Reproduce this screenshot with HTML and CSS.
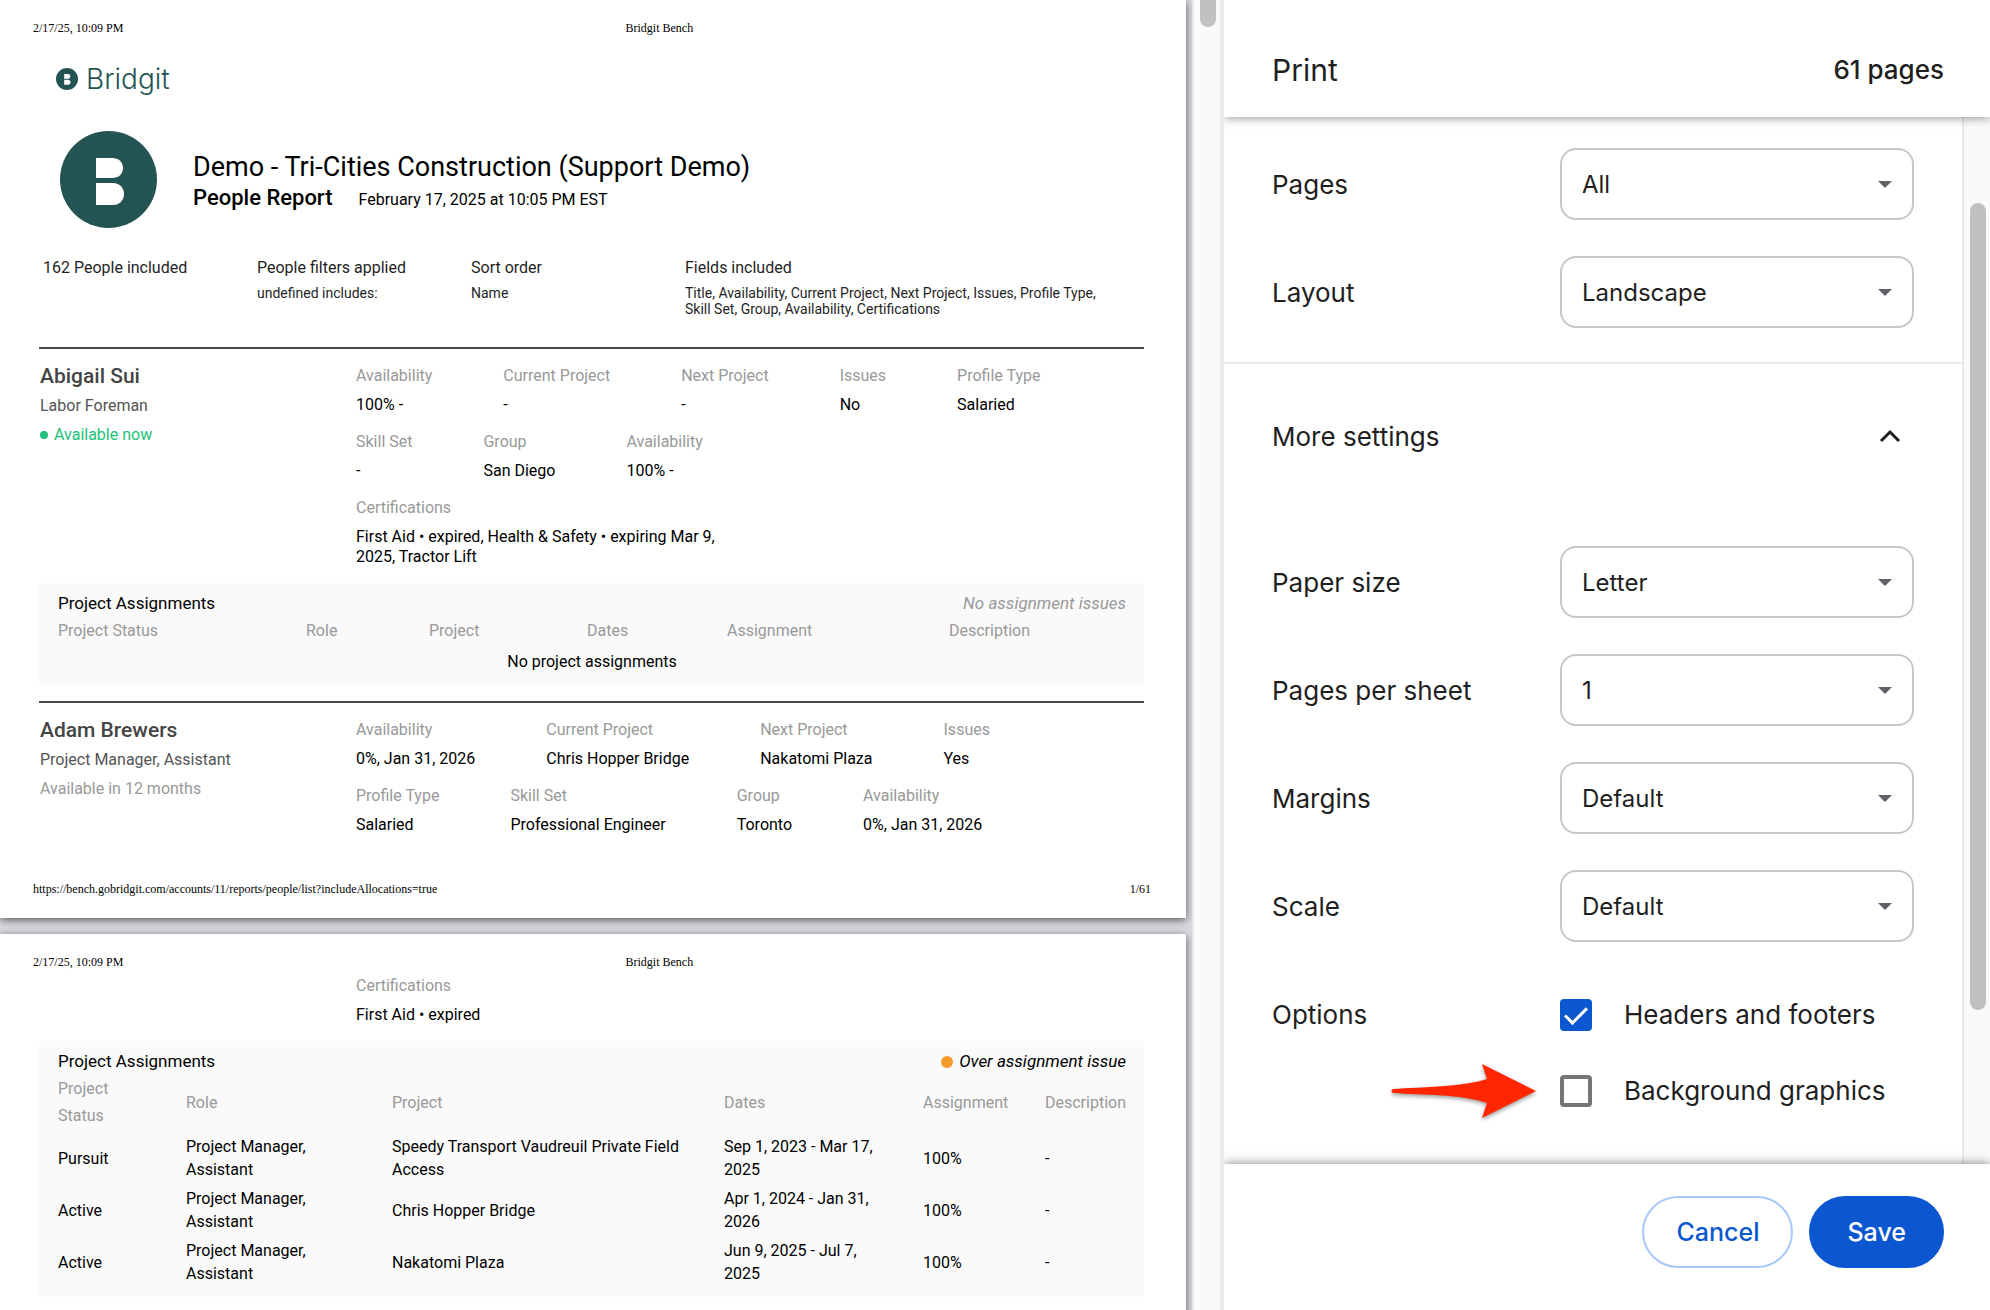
FILE: index.html
```html
<!DOCTYPE html>
<html lang="en">
<head>
    <meta charset="UTF-8">
    <meta name="viewport" content="width=device-width, initial-scale=1.0">
    <title>Print - Bridgit Bench</title>
    <link rel="stylesheet" href="styles.css">
</head>
<body>
    <main class="preview">
        <div class="sheets">
            <section class="sheet first-sheet">
                <div class="sheet-header"><span>2/17/25, 10:09 PM</span><span>Bridgit Bench</span></div>
                <div class="logo">
                    <svg class="logo-mark" viewBox="0 0 97 97" aria-hidden="true">
                        <circle cx="48.500" cy="48.500" r="48.500" fill="#245353"/>
                        <path d="M36 27h16c7 0 11 4 11 10s-4 10-11 10H36z M36 52h17c7 0 11 5 11 11s-4 11-11 11H36z" fill="#fff"/>
                    </svg>
                    <span>Bridgit</span>
                </div>
                <header class="report-header">
                    <svg class="avatar" viewBox="0 0 97 97" aria-hidden="true">
                        <circle cx="48.500" cy="48.500" r="48.500" fill="#245353"/>
                        <path d="M36 27h16c7 0 11 4 11 10s-4 10-11 10H36z M36 52h17c7 0 11 5 11 11s-4 11-11 11H36z" fill="#fff"/>
                    </svg>
                    <div class="report-title">
                        <h1>Demo - Tri-Cities Construction (Support Demo)</h1>
                        <div class="report-line"><h2>People Report</h2><span>February 17, 2025 at 10:05 PM EST</span></div>
                    </div>
                </header>
                <div class="summary">
                    <div><h3>162 People included</h3></div>
                    <div><h3>People filters applied</h3><p>undefined includes:</p></div>
                    <div><h3>Sort order</h3><p>Name</p></div>
                    <div><h3>Fields included</h3><p>Title, Availability, Current Project, Next Project, Issues, Profile Type,<br>Skill Set, Group, Availability, Certifications</p></div>
                </div>

                <article class="person">
                    <div class="person-id">
                        <h2>Abigail Sui</h2>
                        <p class="job">Labor Foreman</p>
                        <p class="available"><i class="dot green"></i>Available now</p>
                    </div>
                    <div class="fields">
                        <dl>
                            <div><dt>Availability</dt><dd>100% -</dd></div>
                            <div><dt>Current Project</dt><dd>-</dd></div>
                            <div><dt>Next Project</dt><dd>-</dd></div>
                            <div><dt>Issues</dt><dd>No</dd></div>
                            <div><dt>Profile Type</dt><dd>Salaried</dd></div>
                        </dl>
                        <dl>
                            <div><dt>Skill Set</dt><dd>-</dd></div>
                            <div><dt>Group</dt><dd>San Diego</dd></div>
                            <div><dt>Availability</dt><dd>100% -</dd></div>
                        </dl>
                        <dl>
                            <div><dt>Certifications</dt><dd>First Aid • expired, Health &amp; Safety • expiring Mar 9,<br>2025, Tractor Lift</dd></div>
                        </dl>
                    </div>
                </article>
                <section class="assignments">
                    <div class="assignments-title"><h3>Project Assignments</h3><em class="no-issue">No assignment issues</em></div>
                    <table class="empty-table">
                        <thead>
                            <tr><th>Project Status</th><th>Role</th><th>Project</th><th>Dates</th><th>Assignment</th><th>Description</th></tr>
                        </thead>
                        <tbody>
                            <tr><td colspan="6">No project assignments</td></tr>
                        </tbody>
                    </table>
                </section>

                <article class="person">
                    <div class="person-id">
                        <h2>Adam Brewers</h2>
                        <p class="job">Project Manager, Assistant</p>
                        <p class="later">Available in 12 months</p>
                    </div>
                    <div class="fields">
                        <dl>
                            <div><dt>Availability</dt><dd>0%, Jan 31, 2026</dd></div>
                            <div><dt>Current Project</dt><dd>Chris Hopper Bridge</dd></div>
                            <div><dt>Next Project</dt><dd>Nakatomi Plaza</dd></div>
                            <div><dt>Issues</dt><dd>Yes</dd></div>
                        </dl>
                        <dl>
                            <div><dt>Profile Type</dt><dd>Salaried</dd></div>
                            <div><dt>Skill Set</dt><dd>Professional Engineer</dd></div>
                            <div><dt>Group</dt><dd>Toronto</dd></div>
                            <div><dt>Availability</dt><dd>0%, Jan 31, 2026</dd></div>
                        </dl>
                    </div>
                </article>
                <div class="sheet-footer"><span>https://bench.gobridgit.com/accounts/11/reports/people/list?includeAllocations=true</span><span>1/61</span></div>
            </section>

            <section class="sheet">
                <div class="sheet-header"><span>2/17/25, 10:09 PM</span><span>Bridgit Bench</span></div>
                <div class="fields continued">
                    <dl>
                        <div><dt>Certifications</dt><dd>First Aid • expired</dd></div>
                    </dl>
                </div>
                <section class="assignments">
                    <div class="assignments-title"><h3>Project Assignments</h3><em><i class="dot orange"></i>Over assignment issue</em></div>
                    <table class="full-table">
                        <thead>
                            <tr><th>Project<br>Status</th><th>Role</th><th>Project</th><th>Dates</th><th>Assignment</th><th>Description</th></tr>
                        </thead>
                        <tbody>
                            <tr><td>Pursuit</td><td>Project Manager,<br>Assistant</td><td>Speedy Transport Vaudreuil Private Field<br>Access</td><td>Sep 1, 2023 - Mar 17,<br>2025</td><td>100%</td><td>-</td></tr>
                            <tr><td>Active</td><td>Project Manager,<br>Assistant</td><td>Chris Hopper Bridge</td><td>Apr 1, 2024 - Jan 31,<br>2026</td><td>100%</td><td>-</td></tr>
                            <tr><td>Active</td><td>Project Manager,<br>Assistant</td><td>Nakatomi Plaza</td><td>Jun 9, 2025 - Jul 7,<br>2025</td><td>100%</td><td>-</td></tr>
                        </tbody>
                    </table>
                </section>
            </section>
        </div>
        <div class="scrollbar preview-scroll"><div class="thumb"></div></div>
    </main>

    <aside class="panel">
        <header class="panel-header"><h1>Print</h1><span>61 pages</span></header>
        <div class="panel-body">
            <form class="settings">
                <div class="group">
                    <div class="row">
                        <label for="pages">Pages</label>
                        <div class="select"><select id="pages"><option>All</option></select></div>
                    </div>
                    <div class="row">
                        <label for="layout">Layout</label>
                        <div class="select"><select id="layout"><option>Landscape</option></select></div>
                    </div>
                </div>
                <button type="button" class="more" aria-expanded="true">
                    More settings
                    <svg width="22" height="14" viewBox="0 0 22 14" aria-hidden="true"><path d="M2 12l9-9 9 9" fill="none" stroke="#1f1f1f" stroke-width="3"/></svg>
                </button>
                <div class="more-group">
                    <div class="row">
                        <label for="paper">Paper size</label>
                        <div class="select"><select id="paper"><option>Letter</option></select></div>
                    </div>
                    <div class="row">
                        <label for="per-sheet">Pages per sheet</label>
                        <div class="select"><select id="per-sheet"><option>1</option></select></div>
                    </div>
                    <div class="row">
                        <label for="margins">Margins</label>
                        <div class="select"><select id="margins"><option>Default</option></select></div>
                    </div>
                    <div class="row">
                        <label for="scale">Scale</label>
                        <div class="select"><select id="scale"><option>Default</option></select></div>
                    </div>
                    <div class="options">
                        <span>Options</span>
                        <div>
                            <label><input type="checkbox" checked>Headers and footers</label>
                            <label><input type="checkbox">Background graphics
                                <svg class="arrow" width="146" height="58" viewBox="0 0 146 58" aria-hidden="true">
                                    <path d="M2 26C32 24 70 24 96 16L91 1L145 28L91 55L96 40C70 31 32 32 2 30C0 29 0 27 2 26Z" fill="#ff2600"/>
                                </svg>
                            </label>
                        </div>
                    </div>
                </div>
            </form>
            <div class="scrollbar panel-scroll"><div class="thumb"></div></div>
        </div>
        <footer class="panel-footer">
            <button type="button" class="cancel">Cancel</button>
            <button type="button" class="save">Save</button>
        </footer>
    </aside>
</body>
</html>
```
FILE: styles.css
```css
* {box-sizing: border-box;}
body {margin: 0; display: flex; height: 100vh; overflow: hidden; font-family: Inter, "Liberation Sans", sans-serif; color: #1f1f1f; background: #ffffff;}
h1, h2, h3, p, dl, dd {margin: 0; font-weight: 400;}

/* preview side */
.preview {flex: 1; min-width: 0; display: flex; background: #d9dade; font-family: Roboto, "Liberation Sans", sans-serif; color: #000000;}
.sheets {flex: 1; min-width: 0; padding-right: 6px; overflow: hidden;}
.sheet {display: flex; flex-direction: column; height: 918px; padding: 19px 42px 20px 39px; margin-bottom: 16px; background: #ffffff; box-shadow: 0 2px 8px rgba(0, 0, 0, 0.6);}
.sheet-header, .sheet-footer {margin: 0 -7px 0 -6px; font-family: "Liberation Serif", serif; font-size: 12px; line-height: 18px;}
.sheet-header {display: grid; grid-template-columns: 53% 1fr;}
.sheet-footer {display: flex; justify-content: space-between; margin-top: auto;}
.logo {display: flex; align-items: center; gap: 8px; height: 40px; margin: 22px 0 0 17px; font-family: Inter, sans-serif; font-size: 28px; font-weight: 300; color: #245353;}
.logo-mark {width: 22px; height: 22px;}
.report-header {display: flex; align-items: center; gap: 36px; margin: 32px 0 0 21px;}
.avatar {width: 97px; height: 97px;}
.report-title {padding-top: 7px;}
.report-header h1 {font-size: 27px; line-height: 32px;}
.report-line {display: flex; align-items: baseline; gap: 26px; font-size: 16px; line-height: 30px;}
.report-line h2 {font-size: 22px; font-weight: 500;}
.summary {display: grid; grid-template-columns: 214px 214px 214px 1fr; margin: 28px 0 0 4px; min-height: 91px; color: #1f1f1f;}
.summary h3 {font-size: 16px; line-height: 24px;}
.summary p {margin-top: 5px; font-size: 14px; line-height: 16px;}

.person {display: flex; padding-top: 12px; border-top: 2px solid #4a4a4a;}
.person-id {width: 317px; padding: 1px 0 0 1px; font-size: 16px; line-height: 29px;}
.person-id h2 {font-size: 21px; font-weight: 500; color: #444444;}
.job {color: #555555;}
.later {color: #999999;}
.available {color: #21bf7b;}
.dot {display: inline-block; width: 8px; height: 8px; margin-right: 6px; border-radius: 50%;}
.green {background: #21bf7b; vertical-align: 1px;}
.orange {width: 12px; height: 12px; background: #f39a2b; vertical-align: -1px;}
.fields {display: flex; flex-direction: column; gap: 12px;}
.fields dl {display: flex; gap: 71px;}
.fields dt {font-size: 16px; line-height: 30px; color: #999999;}
.fields dd {margin-top: 4px; font-size: 16px; line-height: 20px;}
.continued {margin-left: 317px;}

.assignments {margin: 16px 0; padding: 6px 18px 9px 19px; background: #fafafa; font-size: 16px;}
.assignments-title {display: flex; justify-content: space-between; font-size: 17px; line-height: 28px;}
.assignments h3 {font-size: 17px;}
.no-issue {color: #999999;}
.assignments table {width: 100%; table-layout: fixed; border-collapse: collapse;}
.assignments th {padding: 0 0 3px; font-weight: 400; line-height: 27px; text-align: left; color: #999999;}
.assignments td {padding: 3px 0; line-height: 23px;}
.empty-table td {text-align: center;}
.empty-table th:nth-child(1) {width: 248px;}
.empty-table th:nth-child(2) {width: 123px;}
.empty-table th:nth-child(3) {width: 158px;}
.empty-table th:nth-child(4) {width: 140px;}
.empty-table th:nth-child(5) {width: 222px;}
.full-table th:nth-child(1) {width: 128px;}
.full-table th:nth-child(2) {width: 206px;}
.full-table th:nth-child(3) {width: 332px;}
.full-table th:nth-child(4) {width: 199px;}
.full-table th:nth-child(5) {width: 122px;}

/* scrollbars */
.scrollbar {flex: none; background: #fafafa; border-left: 2px solid #e8e8e8;}
.thumb {width: 16px; border-radius: 8px; background: #c1c1c1;}
.preview-scroll {width: 28px; padding-left: 6px;}
.preview-scroll .thumb {height: 27px; border-radius: 0 0 8px 8px;}
.panel-scroll {width: 28px; padding: 86px 0 0 6px;}
.panel-scroll .thumb {height: 84%;}

/* print settings */
.panel {flex: none; width: 770px; display: flex; flex-direction: column; overflow: hidden; border-left: 4px solid #ebebeb; background: #ffffff;}
.panel-header, .panel-footer {position: relative; flex: none; display: flex; align-items: center; background: #ffffff; box-shadow: 0 0 10px rgba(0, 0, 0, 0.5);}
.panel-header {justify-content: space-between; height: 117px; padding: 22px 46px 0 48px;}
.panel-header h1 {font-size: 30px;}
.panel-header span {font-size: 26px; font-weight: 500;}
.panel-body {flex: 1; min-height: 0; display: flex; overflow: hidden;}
.settings {flex: 1; font-size: 26px;}
.group {padding: 13px 0 16px; border-bottom: 2px solid #ebebeb;}
.row, .options {display: grid; grid-template-columns: 288px 1fr; align-items: center; padding: 0 48px;}
.row {height: 108px;}
.select {position: relative;}
.select::after {content: ""; position: absolute; right: 22px; top: 33px; border: 7px solid transparent; border-top-color: #5f6368; border-bottom: 0; pointer-events: none;}
select {appearance: none; width: 100%; height: 72px; padding: 0 20px; border: 2px solid #c7c7c7; border-radius: 16px; background: #ffffff; font: inherit; font-size: 24px; color: #1f1f1f;}
.more {display: flex; align-items: center; justify-content: space-between; width: 100%; height: 144px; padding: 0 61px 0 48px; border: 0; background: none; font: inherit; color: #1f1f1f;}
.more-group {padding-top: 20px;}
.options {align-items: start; margin-top: 17px; line-height: 76px;}
.options label {position: relative; display: flex; align-items: center; gap: 32px;}
input[type="checkbox"] {appearance: none; display: grid; place-items: center; width: 32px; height: 32px; margin: 0; border: 4px solid #757575; border-radius: 4px;}
input[type="checkbox"]:checked {border-color: #0b57d0; background: #0b57d0;}
input[type="checkbox"]:checked::after {content: ""; width: 9px; height: 19px; margin-top: -5px; border: solid #ffffff; border-width: 0 3px 3px 0; transform: rotate(45deg);}
.arrow {position: absolute; left: -169px; top: 10px; filter: drop-shadow(0 2px 2px rgba(0, 0, 0, 0.4));}
.panel-footer {justify-content: flex-end; gap: 16px; height: 146px; padding: 0 46px 10px;}
.panel-footer button {height: 72px; padding: 0 32px; border: 2px solid #a8c7fa; border-radius: 36px; background: #ffffff; font: inherit; font-size: 25px; font-weight: 500; color: #0b57d0;}
.panel-footer .save {padding: 0 36px; border-color: #0b57d0; background: #0b57d0; color: #ffffff;}
```
